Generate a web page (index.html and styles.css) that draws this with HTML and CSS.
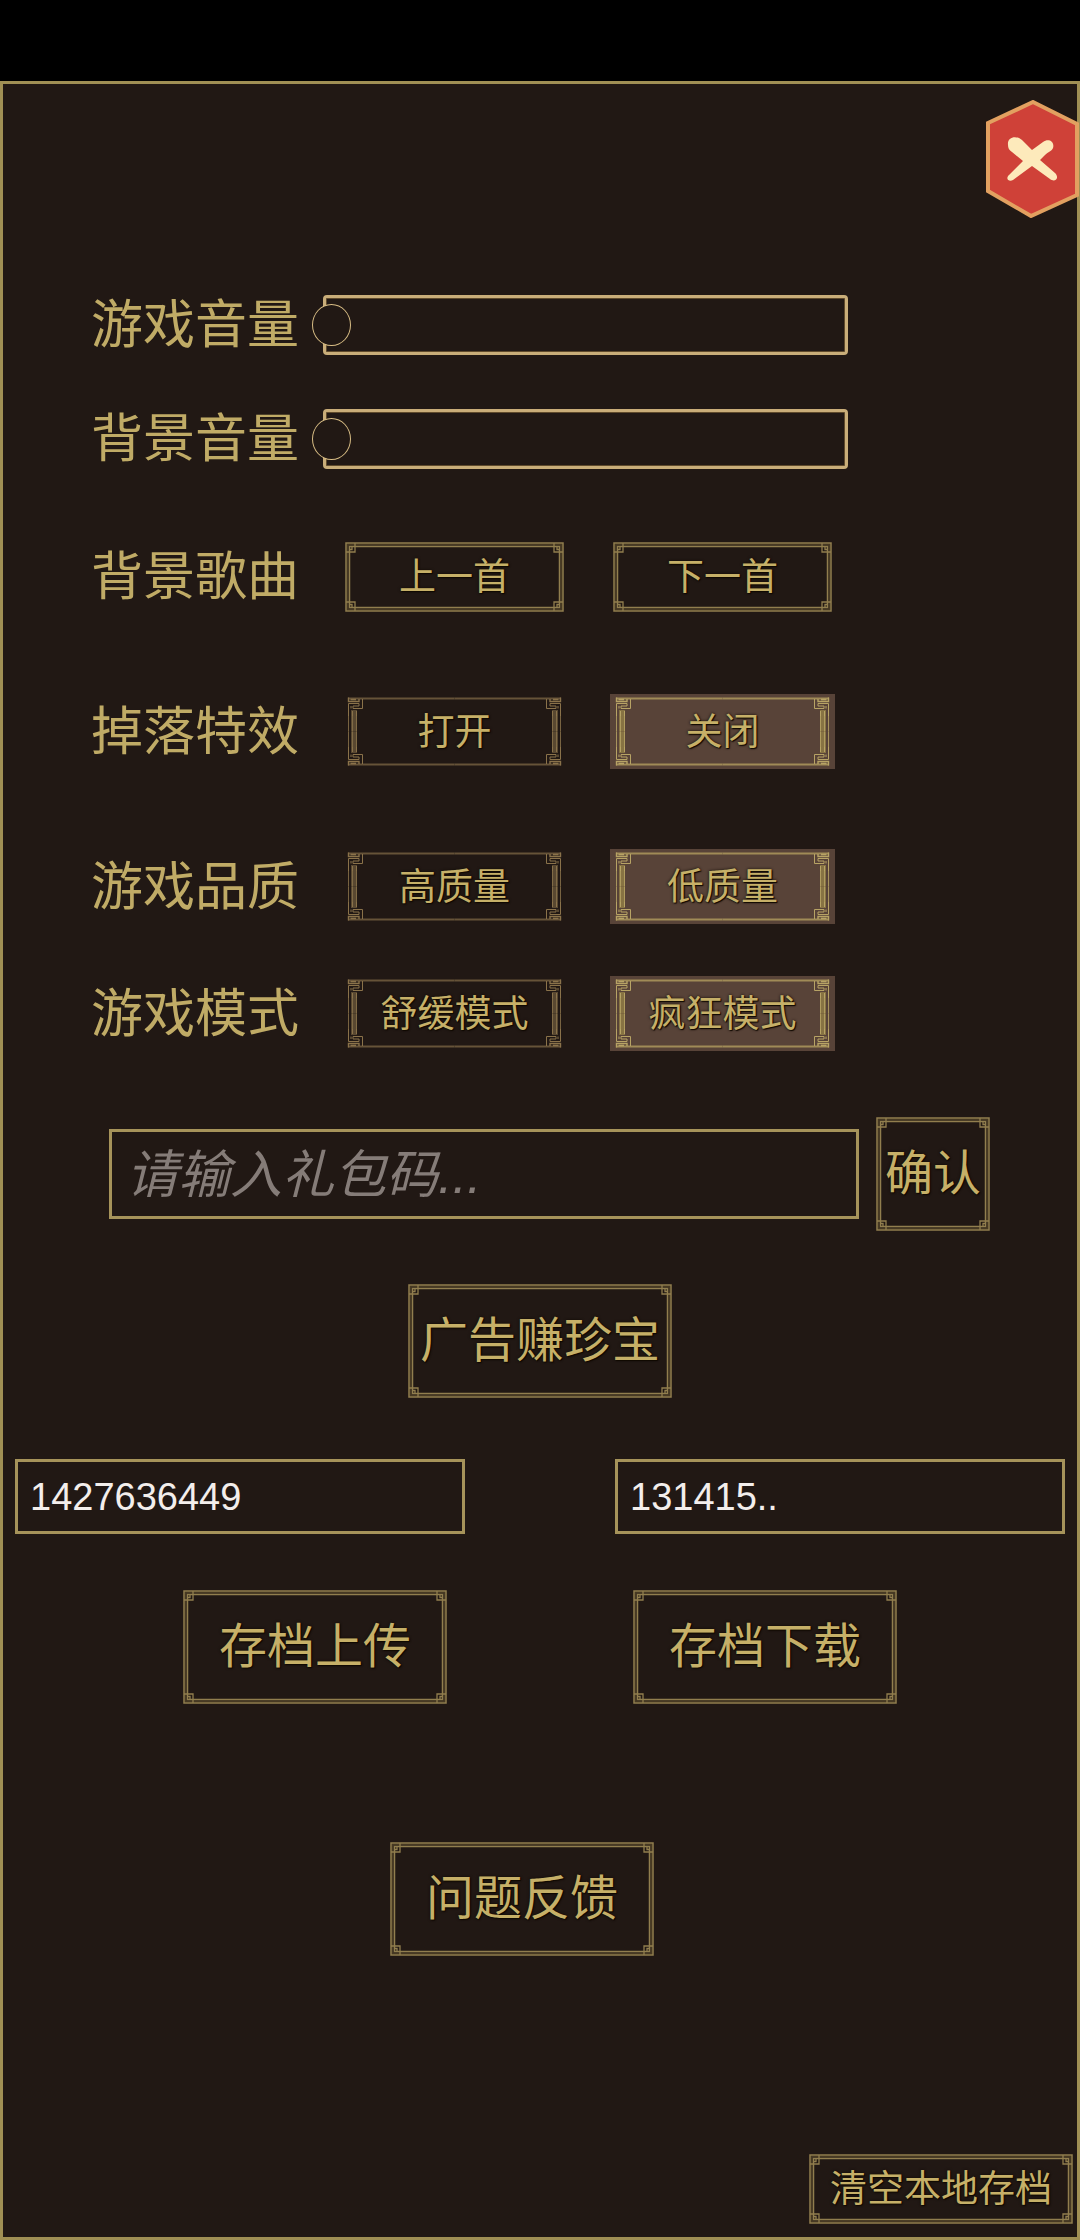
FILE: index.html
```html
<!DOCTYPE html>
<html lang="zh-CN">
<head>
    <meta charset="UTF-8">
    <title>游戏设置</title>
    <meta name="viewport" content="width=device-width, initial-scale=1">
    <link rel="stylesheet" href="styles.css">
</head>
<body>
    <div class="status-bar"></div>
    <main class="panel">
        <button class="close" type="button" aria-label="关闭设置">
            <svg viewBox="0 0 94 118" width="94" height="118">
                <path d="M47 2 L91 24 V95 L45 116 L2 91 V23 Z" fill="#cf4138" stroke="#e2a060" stroke-width="4"/>
                <path d="M22 45 C21 37 30 35 36 40 L46 50 L57 42 C62 38 69 41 67 48 C66 51 62 52 59 55 L54 60 L69 73 C74 78 69 83 64 79 L46 66 L27 80 C23 82 19 79 23 75 L37 61 L26 52 C23 50 22 48 22 45 Z" fill="#fdeabb"/>
            </svg>
        </button>

        <section class="settings">
            <div class="row">
                <label for="gameVolume">游戏音量</label>
                <input class="slider" type="range" id="gameVolume" min="0" max="100" value="0">
            </div>
            <div class="row row-music">
                <label for="musicVolume">背景音量</label>
                <input class="slider" type="range" id="musicVolume" min="0" max="100" value="0">
            </div>
            <div class="row row-song">
                <span class="row-label">背景歌曲</span>
                <div class="choices">
                    <button class="btn btn-small" type="button">上一首</button>
                    <button class="btn btn-small" type="button">下一首</button>
                </div>
            </div>
            <div class="row row-effect">
                <span class="row-label">掉落特效</span>
                <div class="choices">
                    <button class="toggle" type="button">打开</button>
                    <button class="toggle active" type="button">关闭</button>
                </div>
            </div>
            <div class="row row-quality">
                <span class="row-label">游戏品质</span>
                <div class="choices">
                    <button class="toggle" type="button">高质量</button>
                    <button class="toggle active" type="button">低质量</button>
                </div>
            </div>
            <div class="row row-mode">
                <span class="row-label">游戏模式</span>
                <div class="choices">
                    <button class="toggle" type="button">舒缓模式</button>
                    <button class="toggle active" type="button">疯狂模式</button>
                </div>
            </div>
        </section>

        <form class="gift">
            <input class="field gift-code" type="text" aria-label="礼包码" placeholder="请输入礼包码...">
            <button class="btn btn-square" type="button">确认</button>
        </form>

        <div class="ad">
            <button class="btn" type="button">广告赚珍宝</button>
        </div>

        <div class="account">
            <input class="field" type="text" aria-label="账号" value="1427636449">
            <input class="field" type="text" aria-label="密码" value="131415..">
        </div>
        <div class="archive">
            <button class="btn" type="button">存档上传</button>
            <button class="btn" type="button">存档下载</button>
        </div>

        <div class="report">
            <button class="btn" type="button">问题反馈</button>
        </div>

        <div class="bottom">
            <button class="btn btn-small btn-clear" type="button">清空本地存档</button>
        </div>
    </main>

    <script>
        // only one option in each row can be active
        document.querySelectorAll('.toggle').forEach(toggle => {
            toggle.addEventListener('click', () => {
                toggle.parentElement.querySelectorAll('.toggle').forEach(t => t.classList.remove('active'));
                toggle.classList.add('active');
            });
        });
    </script>
</body>
</html>
```
FILE: styles.css
```css
/* Reset & Base Styles */
* {
    box-sizing: border-box;
    margin: 0;
    padding: 0;
}
body {
    font-family: "Liberation Sans", "Noto Sans CJK SC", sans-serif;
    background: #000;
    color: #c0ab66;
    min-height: 100vh;
    display: flex;
    flex-direction: column;
}
button,
input {
    font-family: inherit;
    color: inherit;
    background: none;
    border: none;
    outline: none;
}
button {
    cursor: pointer;
}
.status-bar {
    height: 81px;
}
/* Panel */
.panel {
    position: relative;
    flex: 1;
    display: flex;
    flex-direction: column;
    background: #211814;
    border: 3px solid #a08f54;
}
.close {
    position: absolute;
    top: 16px;
    right: -3px;
    line-height: 0;
}
/* Settings rows */
.settings {
    padding: 211px 229px 0 88px;
}
.row {
    display: flex;
    align-items: center;
}
.row label,
.row-label {
    font-size: 52px;
    line-height: 60px;
    white-space: nowrap;
}
.row-music {
    margin-top: 54px;
}
.row-song {
    margin-top: 73px;
}
.row-effect {
    margin-top: 82px;
}
.row-quality {
    margin-top: 80px;
}
.row-mode {
    margin-top: 52px;
}
.choices {
    flex: 1;
    display: grid;
    grid-template-columns: 1fr 1fr;
    gap: 43px;
    margin: 0 13px 0 43px;
}
/* Slider */
.slider {
    -webkit-appearance: none;
    appearance: none;
    flex: 1;
    min-width: 0;
    height: 60px;
    margin-left: 24px;
}
.slider::-webkit-slider-runnable-track {
    height: 60px;
    border: 3px solid #c9ad79;
    border-radius: 4px;
    box-shadow: inset 0 0 0 1px #5f4a2c;
}
.slider::-webkit-slider-thumb {
    -webkit-appearance: none;
    width: 39px;
    height: 42px;
    margin: 6px -14px;
    border: 1px solid #d8bd85;
    border-radius: 50%;
    background: #211814;
}
/* Buttons */
.btn {
    width: 264px;
    height: 114px;
    border: 12px solid transparent;
    border-image: url("data:image/svg+xml,%3Csvg xmlns='http://www.w3.org/2000/svg' width='60' height='60' fill='none' stroke='%23917e4e'%3E%3Cpath d='M2.5 2.5H57.5V57.5H2.5Z' stroke='%23473923' stroke-width='2'/%3E%3Cpath d='M1 1H59V59H1Z' stroke-width='1.5'/%3E%3Cpath d='M4.5 4.5H55.5V55.5H4.5Z' stroke-width='1.5'/%3E%3Cpath d='M10 1V10H1M7 5V7.5H5M50 1V10H59M53 5V7.5H55M10 59V50H1M7 55V52.5H5M50 59V50H59M53 55V52.5H55' stroke-width='1.3'/%3E%3C/svg%3E") 12 stretch;
    color: #c6b068;
    font-size: 48px;
    line-height: 60px;
    text-shadow: 0 0 3px #100900, 1px 1px 1px #100900;
    white-space: nowrap;
    display: flex;
    align-items: center;
    justify-content: center;
}
.btn-square {
    width: 114px;
}
.btn-small {
    width: auto;
    height: 70px;
    margin: 0 3px;
    padding-top: 2px;
    font-size: 37px;
    line-height: 40px;
}
.btn-clear {
    width: 264px;
    margin: 0;
}
/* Toggle buttons */
.toggle {
    height: 75px;
    padding-top: 2px;
    border: 22px solid transparent;
    border-image: url("data:image/svg+xml,%3Csvg xmlns='http://www.w3.org/2000/svg' width='90' height='90' fill='none' stroke='%238a724a'%3E%3Cg id='a'%3E%3Cg id='b'%3E%3Cpath d='M6 4.5H45' stroke='%23665338' stroke-width='2'/%3E%3Cpath d='M12 16V45' stroke='%23594831' stroke-width='6'/%3E%3Cpath d='M6.5 45V9.5H17V12H11V14.5H20.5V5M10.5 45V17M14.5 45V17M9 14.5V12' /%3E%3Cpath d='M6.5 3.5V7.5H17V5M8.5 5.5H14' stroke-width='1.4'/%3E%3C/g%3E%3Cuse href='%23b' transform='matrix(-1 0 0 1 90 0)'/%3E%3C/g%3E%3Cuse href='%23a' transform='matrix(1 0 0 -1 0 90)'/%3E%3C/svg%3E") 22 stretch;
    color: #c6b068;
    font-size: 37px;
    line-height: 40px;
    text-shadow: 0 0 3px #100900, 1px 1px 1px #100900;
    white-space: nowrap;
    display: flex;
    align-items: center;
    justify-content: center;
}
.toggle.active {
    background: #584338;
    border-image-source: url("data:image/svg+xml,%3Csvg xmlns='http://www.w3.org/2000/svg' width='90' height='90' fill='none' stroke='%23b7a365'%3E%3Cg id='a'%3E%3Cg id='b'%3E%3Cpath d='M6 4.5H45' stroke='%23a08b57' stroke-width='2'/%3E%3Cpath d='M12 16V45' stroke='%23877343' stroke-width='6'/%3E%3Cpath d='M6.5 45V9.5H17V12H11V14.5H20.5V5M10.5 45V17M14.5 45V17M9 14.5V12' /%3E%3Cpath d='M6.5 3.5V7.5H17V5M8.5 5.5H14' stroke-width='1.4'/%3E%3C/g%3E%3Cuse href='%23b' transform='matrix(-1 0 0 1 90 0)'/%3E%3C/g%3E%3Cuse href='%23a' transform='matrix(1 0 0 -1 0 90)'/%3E%3C/svg%3E");
}
/* Text fields */
.field {
    min-width: 0;
    height: 75px;
    padding: 2px 12px 0;
    border: 3px solid #a6935a;
    color: #f3eeec;
    font-size: 38px;
}
.field::placeholder {
    color: #857c78;
    font-style: italic;
    opacity: 1;
}
/* Gift code */
.gift {
    display: flex;
    align-items: center;
    gap: 17px;
    margin-top: 66px;
    padding: 0 87px 0 106px;
}
.gift-code {
    flex: 1;
    height: 90px;
    padding: 2px 14px 0;
    font-size: 52px;
}
.ad {
    display: flex;
    justify-content: center;
    margin-top: 53px;
}
/* Account & archive */
.account {
    display: grid;
    grid-template-columns: 1fr 1fr;
    gap: 150px;
    margin-top: 61px;
    padding: 0 12px;
}
.archive {
    display: flex;
    justify-content: center;
    gap: 186px;
    margin-top: 56px;
}
.report {
    display: flex;
    justify-content: center;
    margin-top: 138px;
    padding-right: 36px;
}
.bottom {
    display: flex;
    justify-content: flex-end;
    margin-top: auto;
    padding: 0 4px 13px 0;
}
```
